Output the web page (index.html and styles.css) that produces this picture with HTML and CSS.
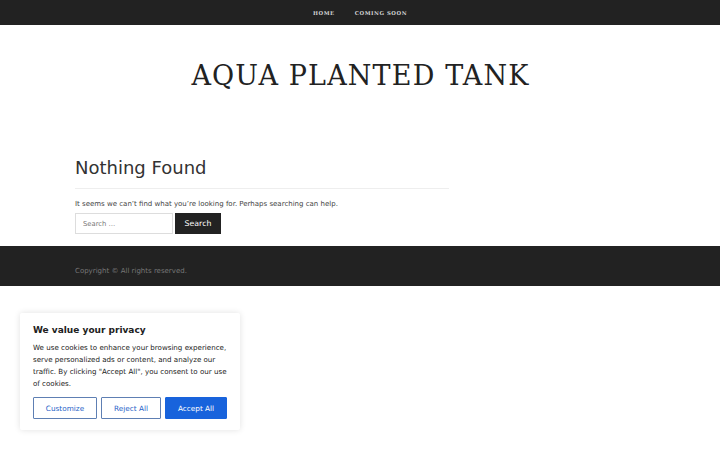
FILE: index.html
```html
<!DOCTYPE html>
<html>
<head>
<meta charset="utf-8">
<link rel="stylesheet" href="styles.css">
</head>
<body>
<nav class="topnav">
  <a href="#">HOME</a>
  <a href="#">COMING SOON</a>
</nav>
<header class="masthead">
  <h1 class="site-title">AQUA PLANTED TANK</h1>
</header>
<main class="content">
  <h2 class="page-title">Nothing Found</h2>
  <p class="lead">It seems we can’t find what you’re looking for. Perhaps searching can help.</p>
  <form class="search">
    <input class="search-field" type="text" placeholder="Search …">
    <button class="search-btn" type="button">Search</button>
  </form>
</main>
<footer class="footer">
  <div class="footer-inner">Copyright © All rights reserved.</div>
</footer>
<div class="cookie">
  <div class="cookie-title">We value your privacy</div>
  <p class="cookie-text">We use cookies to enhance your browsing experience, serve personalized ads or content, and analyze our traffic. By clicking "Accept All", you consent to our use of cookies.</p>
  <div class="cookie-btns">
    <button class="cbtn outline">Customize</button>
    <button class="cbtn outline">Reject All</button>
    <button class="cbtn solid">Accept All</button>
  </div>
</div>
</body>
</html>
```
FILE: styles.css
```css
* { box-sizing: border-box; }
html, body { margin: 0; padding: 0; background: #fff; }
body { font-family: "DejaVu Sans", sans-serif; color: #333; width: 720px; height: 450px; overflow: hidden; position: relative; }
.topnav { height: 25px; background: #222; display: flex; justify-content: center; align-items: center; gap: 20px; padding-left: 0; }
.topnav a { font-family: "DejaVu Serif", serif; font-size: 5.3px; font-weight: bold; letter-spacing: 0.55px; color: #d4d4d4; text-decoration: none; }
.masthead { height: 110px; display: flex; justify-content: center; padding-top: 34px; }
.site-title { margin: 0; font-family: "DejaVu Serif", serif; font-weight: normal; font-size: 27px; letter-spacing: 1.15px; color: #222; line-height: 34px; height: 34px; padding-left: 1px; }
.content { padding: 22px 0 0 75px; height: 111px; }
.page-title { margin: 0; width: 374px; font-weight: normal; font-size: 18px; line-height: 22px; color: #333; padding-bottom: 9px; border-bottom: 1px solid #eee; }
.lead { margin: 11px 0 0; font-size: 7px; line-height: 9px; color: #444; }
.search { display: flex; gap: 2px; margin-top: 4px; }
.search-field { width: 98px; height: 21px; border: 1px solid #ddd; padding: 0 7px; font-family: "DejaVu Sans", sans-serif; font-size: 6.8px; color: #666; outline: none; }
.search-field::placeholder { color: #777; }
.search-btn { width: 46px; height: 21px; border: 0; background: #222; color: #fff; font-family: "DejaVu Sans", sans-serif; font-size: 7.8px; padding: 0; }
.footer { background: #222; height: 40px; padding: 21px 0 0 75px; }
.footer-inner { font-size: 7px; color: #777; }
.cookie { position: absolute; left: 20px; top: 313px; width: 220px; height: 117px; background: #fff; box-shadow: 0 0 6px rgba(0,0,0,0.12); padding: 11px 12px 11px 13px; border-radius: 2px; }
.cookie-title { font-weight: bold; font-size: 9px; color: #212121; line-height: 12px; }
.cookie-text { margin: 6px 0 0; font-size: 7.1px; line-height: 12px; color: #212121; }
.cookie-btns { display: flex; gap: 4px; margin-top: 7px; }
.cbtn { height: 22px; font-family: "DejaVu Sans", sans-serif; font-size: 7.3px; padding: 0; border-radius: 1px; }
.cbtn.outline { background: #fff; border: 1.5px solid #5e7fb3; color: #1f5fc8; }
.cbtn:nth-child(1) { width: 64px; }
.cbtn:nth-child(2) { width: 60px; }
.cbtn.solid { width: 62px; background: #1863dc; border: 1.5px solid #1863dc; color: #fff; }
```
